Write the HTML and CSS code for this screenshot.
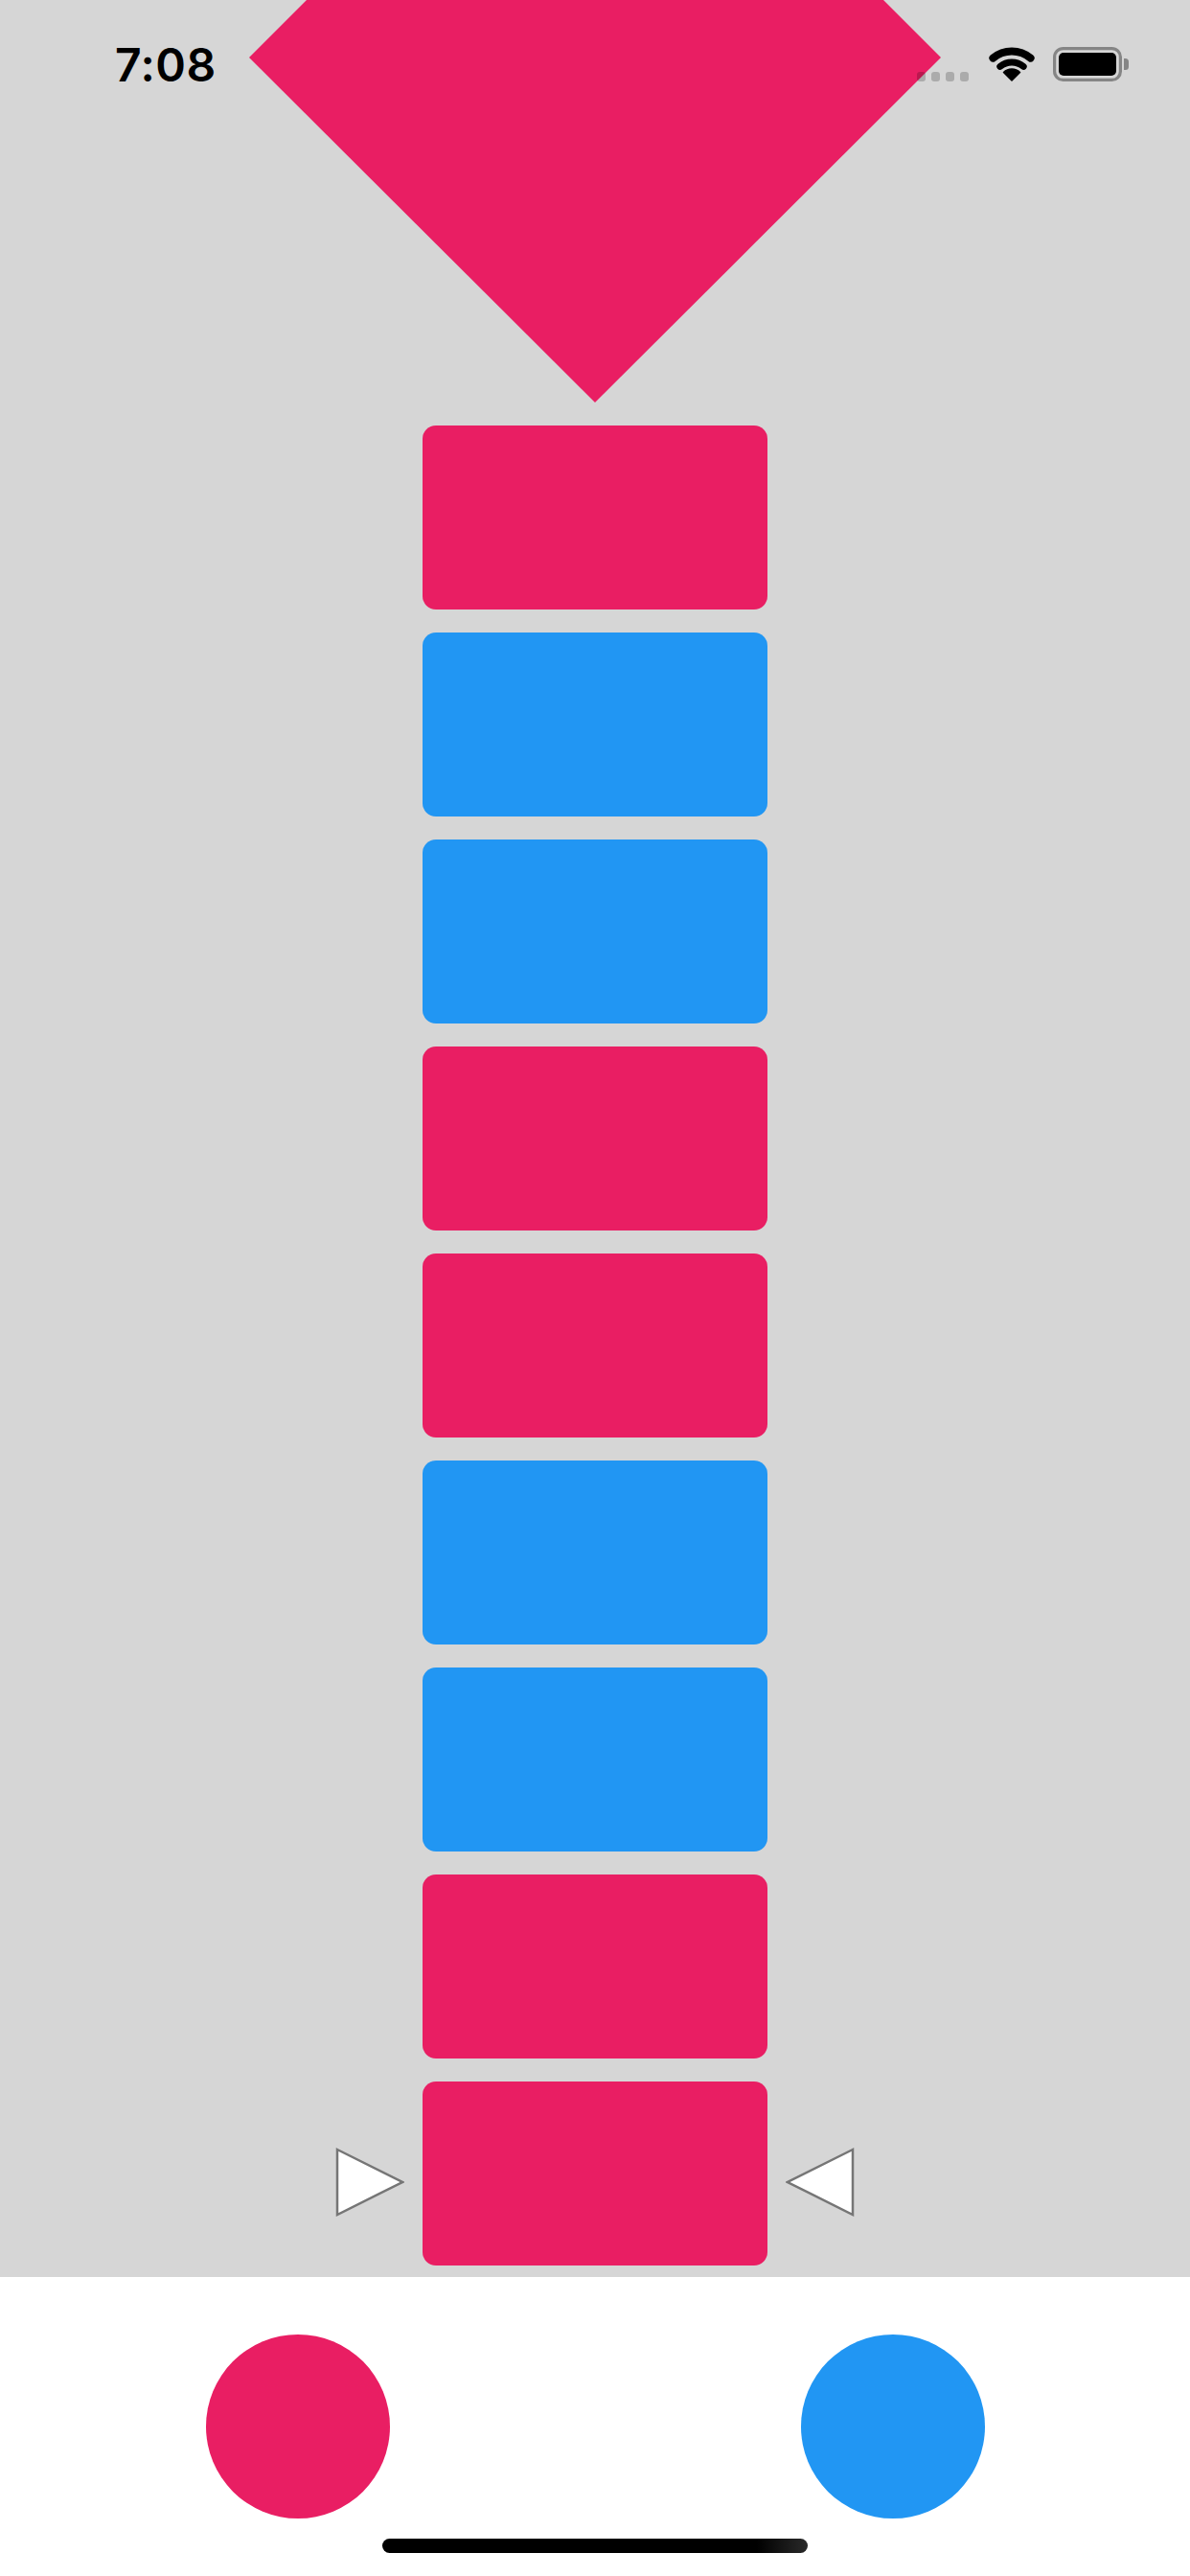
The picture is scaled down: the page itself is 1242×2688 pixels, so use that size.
FILE: index.html
```html
<!DOCTYPE html>
<html>
<head>
<meta charset="utf-8">
<link rel="stylesheet" href="styles.css">
</head>
<body>
<div class="screen">
  <div class="stage">
    <svg class="diamond" width="722" height="420" viewBox="0 0 722 420">
      <polygon points="60,0 662,0 722,60 361,420 0,60" fill="#e91e63"/>
    </svg>
    <div class="stack">
      <div class="row"><div class="tile pink"></div></div>
      <div class="row"><div class="tile blue"></div></div>
      <div class="row"><div class="tile blue"></div></div>
      <div class="row"><div class="tile pink"></div></div>
      <div class="row"><div class="tile pink"></div></div>
      <div class="row"><div class="tile blue"></div></div>
      <div class="row"><div class="tile blue"></div></div>
      <div class="row"><div class="tile pink"></div></div>
      <div class="row">
        <svg class="marker" width="72" height="72" viewBox="0 0 72 72">
          <polygon points="2,2 70,36 2,70" fill="#fff" stroke="#767676" stroke-width="2.5"/>
        </svg>
        <div class="tile pink"></div>
        <svg class="marker" width="72" height="72" viewBox="0 0 72 72">
          <polygon points="70,2 2,36 70,70" fill="#fff" stroke="#767676" stroke-width="2.5"/>
        </svg>
      </div>
    </div>
  </div>
  <div class="controls">
    <div class="slot"><div class="dot pink"></div></div>
    <div class="slot"><div class="dot blue"></div></div>
  </div>

  <div class="statusbar">
    <div class="time">7:08</div>
    <div class="status-icons">
      <div class="signal">
        <span></span><span></span><span></span><span></span>
      </div>
      <svg class="wifi" width="48" height="36" viewBox="0 0 48 36">
        <path d="M4.4,11.6 A30.5,30.5 0 0 1 43.6,11.6" fill="none" stroke="#000" stroke-width="8" stroke-linecap="round"/>
        <path d="M11.8,20.4 A19,19 0 0 1 36.2,20.4" fill="none" stroke="#000" stroke-width="7" stroke-linecap="round"/>
        <path d="M24,35 L15.5,26.5 A12,12 0 0 1 32.5,26.5 Z" fill="#000" stroke="#000" stroke-width="1.5" stroke-linejoin="round"/>
      </svg>
      <svg class="battery" width="80" height="36" viewBox="0 0 80 36">
        <rect x="1.6" y="1.6" width="68.8" height="32.8" rx="9" fill="none" stroke="#858585" stroke-width="3.2"/>
        <rect x="6" y="6" width="60" height="24" rx="5" fill="#000"/>
        <path d="M74,12 h1.5 a3.5,3.5 0 0 1 3.5,3.5 v5 a3.5,3.5 0 0 1 -3.5,3.5 h-1.5 Z" fill="#858585"/>
      </svg>
    </div>
  </div>

  <div class="home-indicator"></div>
</div>
</body>
</html>
```

FILE: styles.css
```css
html, body {
  margin: 0;
  padding: 0;
}

body {
  width: 1242px;
  height: 2688px;
  overflow: hidden;
  background: #ffffff;
  font-family: Inter, "Liberation Sans", sans-serif;
}

.screen {
  position: relative;
  width: 1242px;
  height: 2688px;
  display: flex;
  flex-direction: column;
}

.stage {
  height: 2376px;
  background: #d6d6d6;
  display: flex;
  flex-direction: column;
  align-items: center;
}

.diamond {
  display: block;
  flex: none;
}

.stack {
  padding-top: 24px;
  display: flex;
  flex-direction: column;
  align-items: center;
  gap: 24px;
}

.row {
  display: flex;
  align-items: center;
  justify-content: center;
  gap: 19px;
}

.tile {
  width: 360px;
  height: 192px;
  border-radius: 14px;
}

.pink {
  background: #e91e63;
}

.blue {
  background: #2196f3;
}

.marker {
  display: block;
  flex: none;
  margin-top: 18px;
}

.controls {
  flex: 1;
  display: grid;
  grid-template-columns: 1fr 1fr;
  align-items: center;
  justify-items: center;
  background: #ffffff;
}

.dot {
  width: 192px;
  height: 192px;
  border-radius: 50%;
}

.statusbar {
  position: absolute;
  top: 0;
  left: 0;
  right: 0;
  height: 132px;
  display: flex;
  justify-content: space-between;
  align-items: flex-start;
}

.time {
  margin-left: 120px;
  margin-top: 38px;
  font-size: 48px;
  font-weight: 600;
  line-height: 60px;
  letter-spacing: 0.5px;
  color: #000;
}

.status-icons {
  margin-top: 49px;
  margin-right: 63px;
  display: flex;
  align-items: flex-start;
}

.signal {
  display: flex;
  gap: 6px;
  margin-top: 26px;
  margin-right: 21px;
}

.signal span {
  width: 9px;
  height: 10px;
  border-radius: 3px;
  background: rgba(0, 0, 0, 0.2);
}

.wifi {
  display: block;
  margin-right: 19px;
}

.battery {
  display: block;
}

.home-indicator {
  position: absolute;
  left: 399px;
  bottom: 24px;
  width: 444px;
  height: 15px;
  border-radius: 8px;
  background: linear-gradient(to right, #000 0%, #000 88%, #2a2a2a 100%);
}
```
